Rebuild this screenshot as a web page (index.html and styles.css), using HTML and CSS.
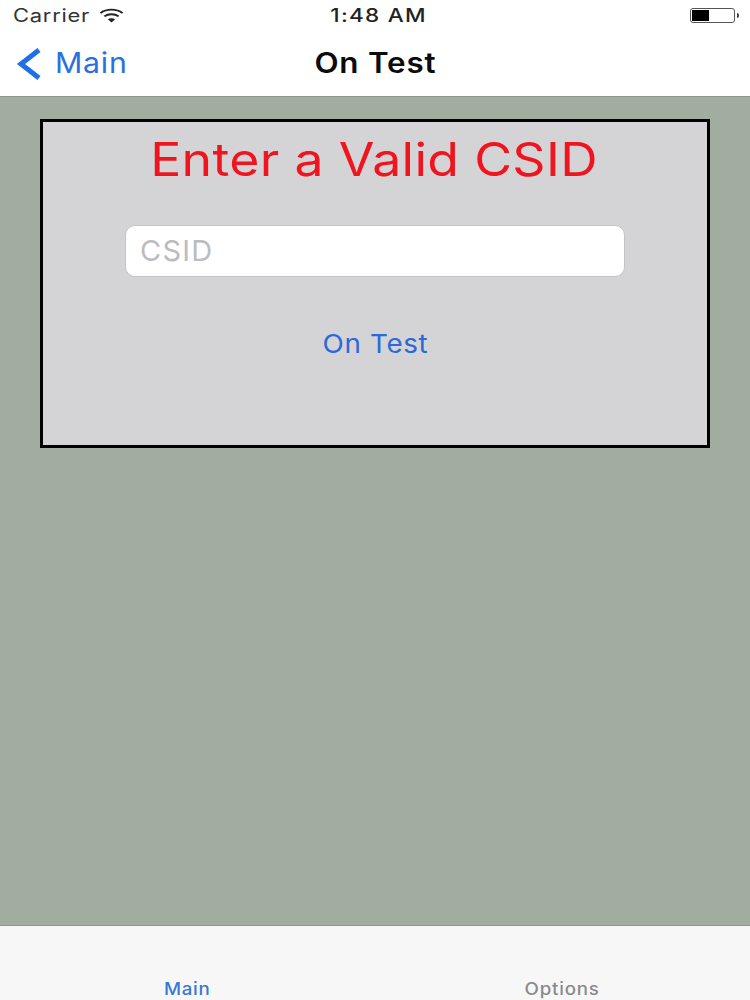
FILE: index.html
```html
<!DOCTYPE html>
<html lang="en">
<head>
<meta charset="utf-8">
<title>On Test</title>
<link rel="stylesheet" href="styles.css">
</head>
<body>
<div class="app">
  <header class="top">
    <div class="status">
      <div class="status-left">
        <span class="carrier">Carrier</span>
        <svg class="wifi" viewBox="0 0 26 18" width="25" height="15" preserveAspectRatio="none" aria-hidden="true">
          <path d="M1.5 6.2C7.8.6 18.2.6 24.5 6.2" fill="none" stroke="#222" stroke-width="2.2"/>
          <path d="M5.6 10C9.6 6.6 16.4 6.6 20.4 10" fill="none" stroke="#222" stroke-width="2.2"/>
          <path d="M9.2 13.4C11.2 11.8 14.8 11.8 16.8 13.4L13 17.4Z" fill="#222"/>
        </svg>
      </div>
      <span class="time">1:48 AM</span>
      <div class="battery"><div class="battery-body"><div class="battery-fill"></div></div><div class="battery-tip"></div></div>
    </div>
    <nav class="nav">
      <a class="back">
        <svg viewBox="0 0 28 34" width="28" height="34" aria-hidden="true"><path d="M24 3 L6 17 L24 31" fill="none" stroke="#1e6fe8" stroke-width="5"/></svg>
        <span class="back-label">Main</span>
      </a>
      <span class="title">On Test</span>
    </nav>
  </header>
  <main class="content">
    <section class="card">
      <h1 class="heading">Enter a Valid CSID</h1>
      <input class="field" type="text" placeholder="CSID">
      <a class="action">On Test</a>
    </section>
  </main>
  <footer class="tabs">
    <span class="tab active"><span class="tab-label">Main</span></span>
    <span class="tab"><span class="tab-label">Options</span></span>
  </footer>
</div>
</body>
</html>
```
FILE: styles.css
```css
* { box-sizing: border-box; }
html, body { margin: 0; padding: 0; }
body { font-family: Inter, "Liberation Sans", sans-serif; }
.app { width: 750px; height: 1000px; display: flex; flex-direction: column; overflow: hidden; background: #a0ad9f; }
.top { height: 97px; flex: none; background: #fff; border-bottom: 1px solid #8d988c; display: flex; flex-direction: column; }
.status { height: 31px; padding: 0 11px 0 13px; display: grid; grid-template-columns: 1fr auto 1fr; align-items: center; color: #222; }
.status-left { display: flex; align-items: center; gap: 23px; }
.carrier { display: inline-block; font-size: 18px; letter-spacing: .6px; color: #333; transform: scaleX(1.22); transform-origin: left center; }
.wifi { margin-top: -1px; }
.time { display: inline-block; margin-left: 6px; font-size: 18px; font-weight: 500; letter-spacing: 1px; color: #222; transform: scaleX(1.25); }
.battery { justify-self: end; display: flex; align-items: center; gap: 2px; }
.battery-body { width: 45px; height: 15px; border: 1px solid #555; border-radius: 3px; padding: 1px; }
.battery-fill { width: 17px; height: 100%; background: #000; }
.battery-tip { width: 2px; height: 5px; background: #444; border-radius: 0 2px 2px 0; }
.nav { flex: 1; position: relative; display: flex; align-items: center; justify-content: center; padding-bottom: 1px; }
.back { position: absolute; left: 15px; top: 16px; display: flex; align-items: center; gap: 12px; color: #2a70e0; font-size: 28px; letter-spacing: .7px; }
.back-label { display: inline-block; margin-top: -2px; transform: scaleX(1.08); transform-origin: left center; }
.title { display: inline-block; font-size: 28px; font-weight: 600; letter-spacing: .7px; color: #0b0b0b; transform: scaleX(1.12); }
.content { flex: 1; padding: 22px 40px 0 40px; }
.card { width: 670px; height: 329px; border: 3px solid #000; background: #d4d4d6; display: flex; flex-direction: column; align-items: center; }
.heading { margin: 9px 0 0 -3px; font-size: 46px; line-height: 56px; font-weight: 400; letter-spacing: .3px; color: #f0141e; transform: scaleX(1.125); }
.field { margin-top: 38px; width: 500px; height: 52px; padding: 0 14px 2px; border: 1px solid #c4c4c6; border-radius: 10px; background: #fff; font-family: inherit; font-size: 29px; letter-spacing: 1.2px; outline: none; }
.field::placeholder { color: #bcbcbe; opacity: 1; }
.action { display: inline-block; margin-top: 51px; font-size: 26px; line-height: 32px; letter-spacing: .6px; color: #2d68d8; transform: scaleX(1.07); }
.tabs { height: 75px; flex: none; background: #f7f7f8; border-top: 1px solid #8d988c; display: grid; grid-template-columns: 375px 375px; align-items: end; }
.tab { text-align: center; font-size: 17px; line-height: 20px; letter-spacing: .7px; color: #8a8a8c; font-weight: 500; padding-bottom: 1px; }
.tab-label { display: inline-block; transform: scaleX(1.1); }
.tab.active { color: #3a78d0; }
```
